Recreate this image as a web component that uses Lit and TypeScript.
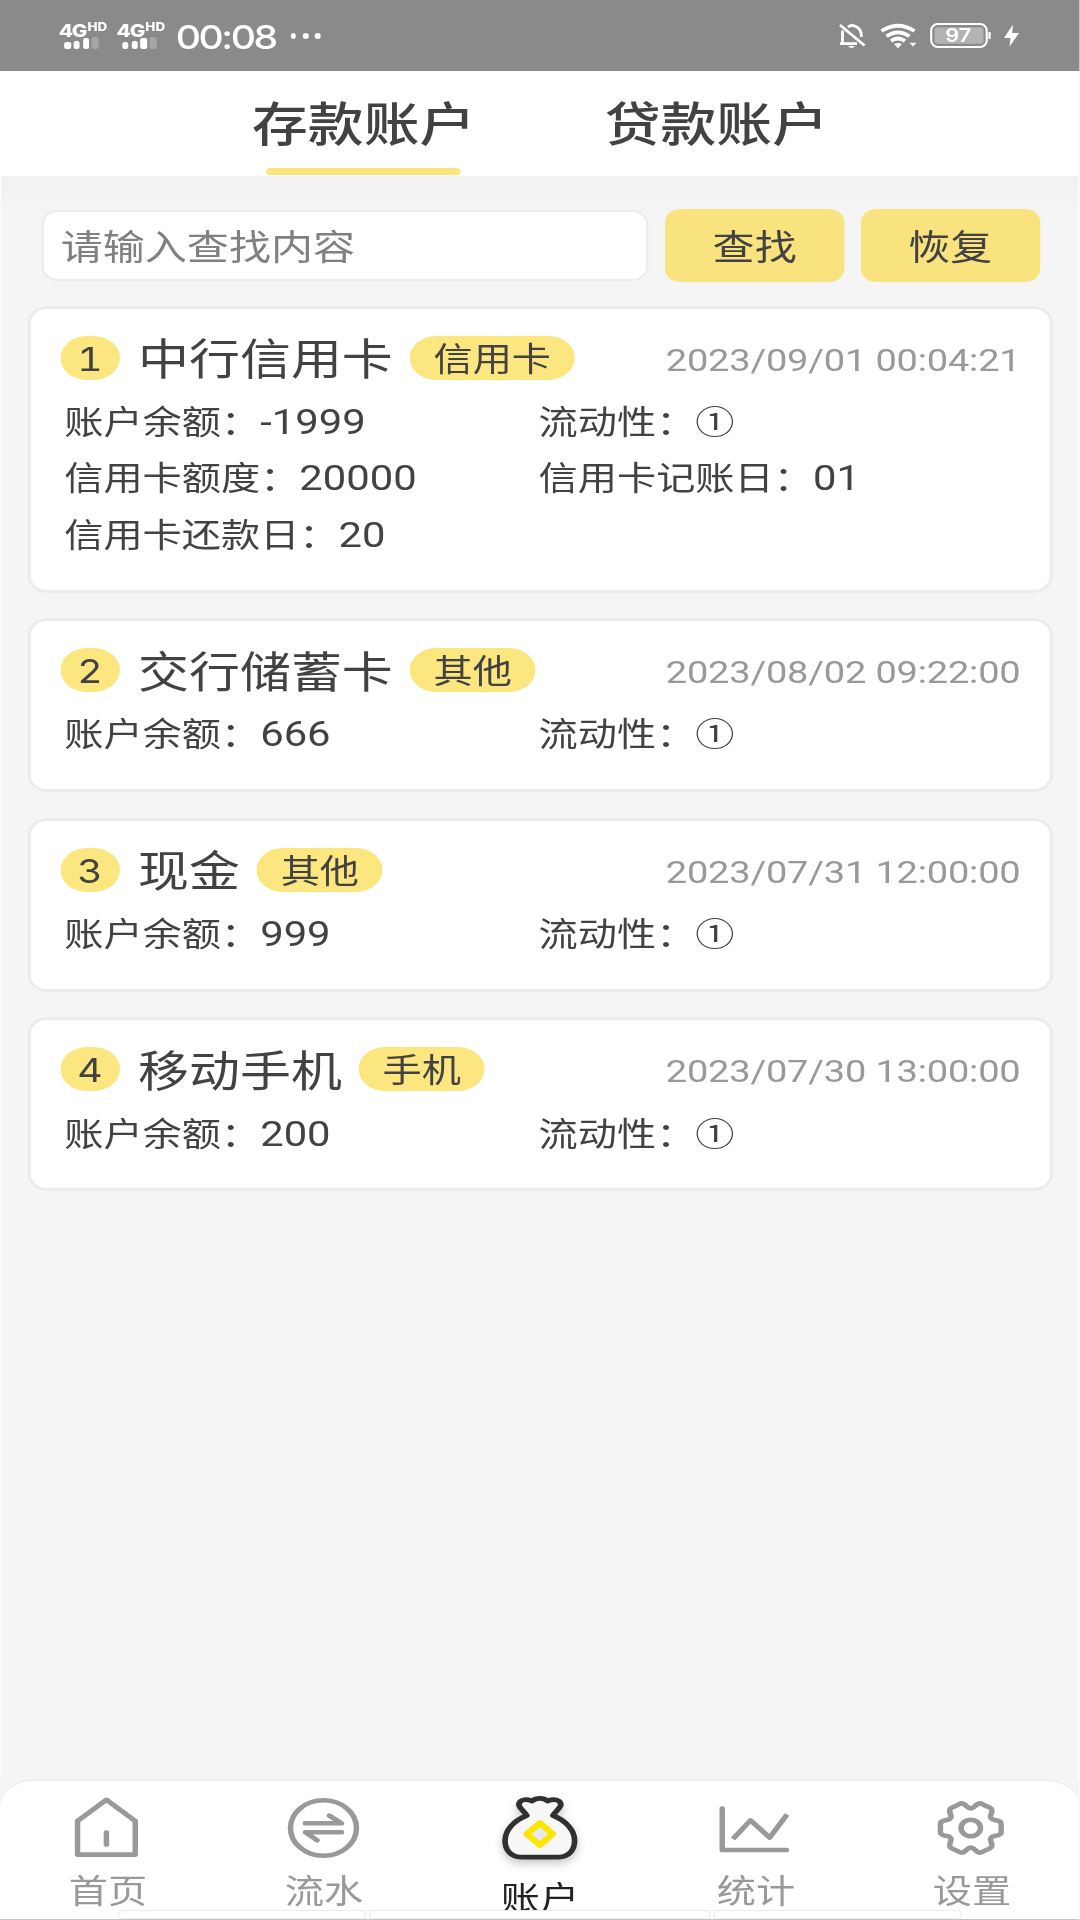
import { LitElement, html, css, svg } from "lit";
import { customElement, property, state } from "lit/decorators.js";
import { classMap } from "lit/directives/class-map.js";

interface Account {
  name: string;
  tag: string;
  time: string;
  fields: [string, string][];
}

const ACCOUNTS: Account[] = [
  {
    name: "中行信用卡",
    tag: "信用卡",
    time: "2023/09/01 00:04:21",
    fields: [
      ["账户余额", "-1999"],
      ["流动性", "①"],
      ["信用卡额度", "20000"],
      ["信用卡记账日", "01"],
      ["信用卡还款日", "20"],
    ],
  },
  {
    name: "交行储蓄卡",
    tag: "其他",
    time: "2023/08/02 09:22:00",
    fields: [["账户余额", "666"], ["流动性", "①"]],
  },
  {
    name: "现金",
    tag: "其他",
    time: "2023/07/31 12:00:00",
    fields: [["账户余额", "999"], ["流动性", "①"]],
  },
  {
    name: "移动手机",
    tag: "手机",
    time: "2023/07/30 13:00:00",
    fields: [["账户余额", "200"], ["流动性", "①"]],
  },
];

/** Closed outline of a six-lobed gear centred on the origin. */
function gearPath(): string {
  const pts: [number, number][] = [];
  for (let i = 0; i < 6; i++) {
    for (const [offset, r] of [[0, 17.6], [15, 26.8], [30, 25.4], [45, 26.8]]) {
      const a = ((i * 60 + offset) * Math.PI) / 180;
      pts.push([Math.sin(a) * r, -Math.cos(a) * r]);
    }
  }
  const mid = (a: [number, number], b: [number, number]) =>
    `${((a[0] + b[0]) / 2).toFixed(2)} ${((a[1] + b[1]) / 2).toFixed(2)}`;
  let d = `M${mid(pts[pts.length - 1], pts[0])}`;
  pts.forEach((p, i) => {
    d += `Q${p[0].toFixed(2)} ${p[1].toFixed(2)} ${mid(p, pts[(i + 1) % pts.length])}`;
  });
  return d + "Z";
}

const ICONS = {
  home: svg`<g transform="translate(-1.4 0)"><path d="M-24.3 -7L0 -28.2L24.3 -7V26.6H-24.3Z"/><path d="M0 4.5V16.5"/></g>`,
  flow: svg`<g transform="translate(-0.6 0)"><circle r="27.8"/><path d="M-15.2 -4.7H15.2L5 -12.4M15.2 4.3H-15.2L-5.4 12.2"/></g>`,
  bag: svg`<g transform="translate(-0.4 0.5)"><path class="sack" d="M-11 -13C-13 -18 -20.5 -22 -16.5 -27C-13 -30.5 -9 -28.5 -6.5 -27.5C-3 -31 3 -31 6.5 -27.5C9 -28.5 13 -30.5 16.5 -27C20.5 -22 13 -18 11 -13C22 -8 29.3 2 29.3 12C29.3 22 24 28.6 16 28.6H-16C-24 28.6 -29.3 22 -29.3 12C-29.3 2 -22 -8 -11 -13Z"/><path class="coin" d="M0 -5.5L11 5.5L0 16.5L-11 5.5Z"/></g>`,
  chart: svg`<g transform="translate(-1.2 0)"><path d="M-27.6 -19.5V22H26.4"/><path class="butt" d="M-18.6 11L-3.8 -7.6L12.4 9.6L27 -13.4"/></g>`,
  gear: svg`<g transform="translate(-1.5 0)"><path d=${gearPath()}/><circle r="8.2"/></g>`,
};

type IconName = keyof typeof ICONS;

@customElement("nav-icon")
class NavIcon extends LitElement {
  @property() name: IconName = "home";

  static styles = css`
    :host { display: block; height: 70px; }
    svg { display: block; width: 70px; height: 70px; overflow: visible; fill: none; stroke: #999; stroke-width: 4.6; stroke-linecap: round; stroke-linejoin: round; }
    .sack { stroke: #303030; stroke-width: 4.8; fill: #f7f7f7; filter: drop-shadow(0 4px 4px rgba(0, 0, 0, 0.22)); }
    .coin { stroke: #fee600; stroke-width: 5.6; fill: #e8e8ee; }
    .butt { stroke-linecap: butt; stroke-linejoin: round; }
  `;

  render() {
    return html`<svg viewBox="-35 -35 70 70">${ICONS[this.name]}</svg>`;
  }
}

@customElement("status-bar")
class StatusBar extends LitElement {
  static styles = css`
    :host { display: flex; justify-content: space-between; height: 71px; background: #8a8a8a; box-sizing: border-box; padding: 0 50px 0 49.4px; color: #fff; }
    .side { display: flex; align-items: flex-start; }
    .sim { width: 41px; margin-right: 7.8px; padding-top: 21.5px; }
    .net { display: flex; align-items: flex-start; height: 17px; font-size: 17.5px; line-height: 17px; font-weight: 800; letter-spacing: -1px; }
    .hd { font-size: 11.3px; line-height: 11px; letter-spacing: 0; padding-top: 0.5px; margin-left: 1px; }
    .bars { display: flex; align-items: flex-end; gap: 2.2px; height: 10.5px; padding-left: 4.6px; }
    .bar { width: 5.6px; height: 7px; border-radius: 2px; background: #fff; }
    .b2 { height: 8px; }
    .b3 { height: 11px; }
    .b4 { height: 12.5px; background: #a6a6a6; }
    .time { font-size: 33px; line-height: 40px; font-weight: 500; padding-top: 17px; letter-spacing: -2.1px; margin-left: 1px; }
    .dots { display: flex; gap: 5.4px; padding: 33px 0 0 12.5px; }
    .dot { width: 4.8px; height: 5.6px; border-radius: 50%; background: #fff; }
    .icons { display: block; width: 155.8px; height: 71px; }
    .n { font: 600 18.5px Inter, sans-serif; fill: #fff; }
  `;

  render() {
    const sim = html`<div class="sim">
      <div class="net">4G<span class="hd">HD</span></div>
      <div class="bars"><i class="bar"></i><i class="bar b2"></i><i class="bar b3"></i><i class="bar b4"></i></div>
    </div>`;
    return html`
      <div class="side">
        ${sim}${sim}
        <div class="time">00:08</div>
        <div class="dots"><i class="dot"></i><i class="dot"></i><i class="dot"></i></div>
      </div>
      <svg class="icons" viewBox="836 0 185 71" preserveAspectRatio="none" fill="none" stroke="#fff">
        <path d="M840 25L864.5 45.5M842.5 30.5V43M840 43.7H857M848 27Q851.5 24.5 856 26.6Q861.5 29 861.5 37" stroke-width="2.8"/>
        <path d="M848 46H855Q851.5 50 848 46ZM849 24.8Q851.7 22.5 854.5 24.8Z" fill="#fff" stroke="none"/>
        <path d="M881.5 31Q898 20.5 914.5 31M886.5 36.3Q898 28.5 909.5 36.3M891 41Q898 36 905 41" stroke-width="3.8"/>
        <path d="M894 44Q898 42 902 44L898 48.2ZM909.5 42.8H916.5L913 46.5Z" fill="#fff" stroke="none"/>
        <rect x="931.2" y="24" width="55.5" height="23" rx="6.5" stroke-width="2.2"/>
        <rect x="934.5" y="27.2" width="49" height="16.6" rx="3" fill="#b3b3b3" stroke="none"/>
        <path d="M989.5 32V39" stroke-width="2.2"/>
        <text class="n" stroke="none" transform="translate(945.2 42.4) scale(1.18 1)">97</text>
        <path d="M1013 24.5L1004 38H1010.5L1009.5 46.8L1019 33H1012.2Z" fill="#fff" stroke="none"/>
      </svg>
    `;
  }
}

@customElement("account-card")
class AccountCard extends LitElement {
  @property({ attribute: false }) account!: Account;
  @property({ type: Number }) index = 1;

  static styles = css`
    :host { display: block; box-sizing: border-box; background: #fff; border: 3px solid #ececec; border-radius: 17px; padding: 27px 24.8px 26.2px 24.4px; }
    .head { display: flex; align-items: center; height: 44px; }
    .no, .tag { height: 44px; line-height: 47px; border-radius: 22px; background: #fbe680; font-size: 33px; }
    .no { padding: 0 14.3px; font-variant-numeric: tabular-nums; }
    .name { font-size: 42.9px; line-height: 44px; margin: 3px 14.3px 0 15.5px; }
    .tag { padding: 0 20px; }
    .time { margin-left: auto; font-family: Roboto, sans-serif; font-size: 32px; line-height: 44px; padding-top: 4px; letter-spacing: -0.15px; color: #999; white-space: pre; }
    .fields { display: grid; grid-template-columns: 399.5px 1fr; grid-auto-rows: 56.5px; padding: 14.3px 0 0 3.3px; font-size: 33px; line-height: 56px; }
    .field { white-space: nowrap; }
    .value { font-family: Roboto, sans-serif; font-size: 35.2px; line-height: 0; }
    .mark { font-family: "Noto Sans CJK SC", sans-serif; font-size: 33px; line-height: 0; }
  `;

  render() {
    const a = this.account;
    return html`
      <div class="head">
        <span class="no">${this.index}</span>
        <span class="name">${a.name}</span>
        <span class="tag">${a.tag}</span>
        <span class="time">${a.time}</span>
      </div>
      <div class="fields">
        ${a.fields.map(
          ([k, v]) => html`<div class="field">${k}：<span class=${v === "①" ? "mark" : "value"}>${v}</span></div>`,
        )}
      </div>
    `;
  }
}

@customElement("app-root")
class AppRoot extends LitElement {
  @state() private tab = 0;
  @state() private page = 2;

  static styles = css`
    :host { display: block; width: 1080px; height: 1920px; overflow: hidden; }
    /* The layout is set on a narrower canvas and widened to fill the viewport. */
    .stage { display: flex; flex-direction: column; width: 909.474px; height: 1920px; transform: scaleX(1.1875); transform-origin: 0 0; background: #f5f5f5; color: #424242; font-family: Inter, "Noto Sans CJK SC", sans-serif; }
    .tabs { display: flex; justify-content: center; gap: 109px; height: 105px; background: #fff; }
    .tab { width: 188px; display: flex; flex-direction: column; align-items: center; justify-content: space-between; font-size: 47px; line-height: 60px; font-weight: 500; padding-top: 23px; box-sizing: border-box; white-space: nowrap; cursor: pointer; }
    .line { width: 164px; height: 7px; border-radius: 4px; margin-bottom: 1px; }
    .on .line { background: #fae57e; }
    .main { flex: 1; box-sizing: border-box; border: solid #fdfdfd; border-width: 0 1.5px; background: linear-gradient(#f1f1f1, #f5f5f5 40px); }
    .search { display: flex; align-items: center; height: 73px; padding: 33px 32.3px 0 34px; }
    .input { width: 511.2px; height: 71px; box-sizing: border-box; border: 2px solid #ececec; border-radius: 14px; background: #fff; color: #808080; font-size: 35.4px; line-height: 72px; padding-left: 14.2px; margin-right: 13.8px; }
    .btn { width: 151px; height: 73px; border-radius: 13px; background: #f9e37f; font-size: 35.4px; line-height: 78px; text-align: center; cursor: pointer; }
    .btn + .btn { margin-left: 13.7px; }
    .list { display: flex; flex-direction: column; gap: 25.6px; padding: 23.6px 21.3px 0 22.4px; }
    .nav { box-sizing: border-box; height: 141px; border-top: 2px solid #ededed; border-radius: 28px 28px 0 0; background: #fff; display: flex; flex-direction: column; }
    .items { display: flex; height: 129px; }
    .item { flex: 1; display: flex; flex-direction: column; align-items: center; padding-top: 12px; color: #999; font-size: 33px; line-height: 36px; cursor: pointer; }
    .label { margin-top: 10px; }
    .current { color: #222; }
    .current .label { margin-top: 16.5px; }
    .strips { display: flex; gap: 3px; height: 9px; padding: 0 99px; border-bottom: 1px solid #c4c4c4; }
    .strip { flex: 209; box-sizing: border-box; border: 1.5px solid #ececec; background: #fff; }
    .mid { flex: 287; }
    .first { border-radius: 5px 0 0 5px; }
    .last { border-radius: 0 5px 5px 0; }
  `;

  private nav: [string, IconName][] = [
    ["首页", "home"],
    ["流水", "flow"],
    ["账户", "bag"],
    ["统计", "chart"],
    ["设置", "gear"],
  ];

  render() {
    return html`
      <div class="stage">
        <status-bar></status-bar>
        <div class="tabs">
          ${["存款账户", "贷款账户"].map(
            (t, i) => html`<div class=${classMap({ tab: true, on: i === this.tab })} @click=${() => (this.tab = i)}>
              <span>${t}</span><i class="line"></i>
            </div>`,
          )}
        </div>
        <div class="main">
          <div class="search">
            <div class="input">请输入查找内容</div>
            <div class="btn">查找</div>
            <div class="btn">恢复</div>
          </div>
          <div class="list">
            ${ACCOUNTS.map((a, i) => html`<account-card .account=${a} .index=${i + 1}></account-card>`)}
          </div>
        </div>
        <div class="nav">
          <div class="items">
            ${this.nav.map(
              ([label, icon], i) => html`<div class=${classMap({ item: true, current: i === this.page })} @click=${() => (this.page = i)}>
                <nav-icon .name=${icon}></nav-icon>
                <span class="label">${label}</span>
              </div>`,
            )}
          </div>
          <div class="strips"><i class="strip first"></i><i class="strip mid"></i><i class="strip last"></i></div>
        </div>
      </div>
    `;
  }
}
